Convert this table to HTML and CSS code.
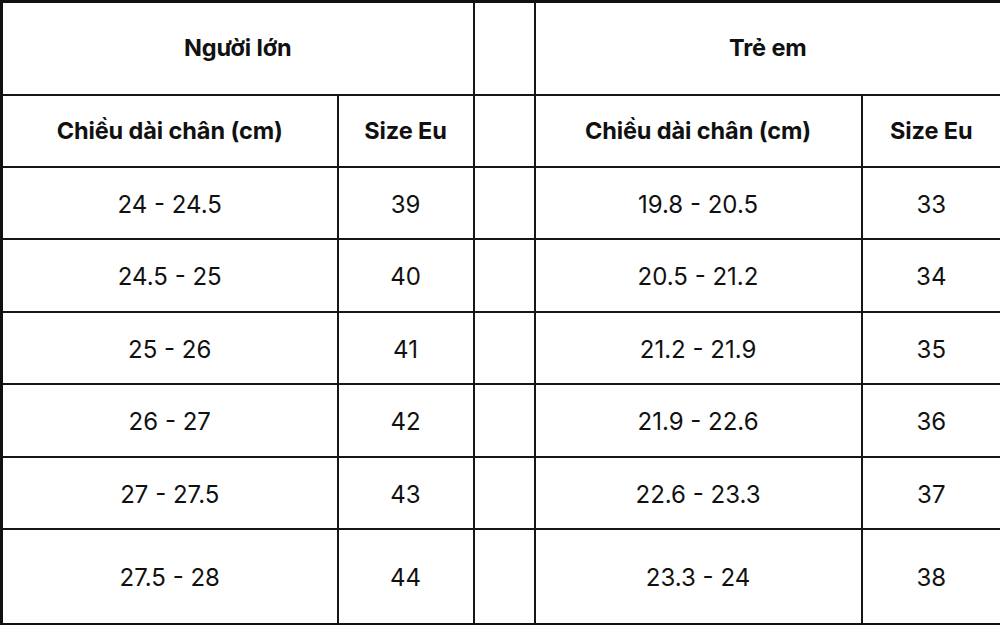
FILE: index.html
```html
<!DOCTYPE html>
<html lang="vi">
<head>
<meta charset="utf-8">
<title>Bảng size</title>
<link rel="stylesheet" href="styles.css">
</head>
<body>
<table class="size-table">
  <colgroup>
    <col class="c-len">
    <col class="c-size">
    <col class="c-gap">
    <col class="c-len2">
    <col class="c-size2">
  </colgroup>
  <tr class="row-title">
    <th colspan="2">Người lớn</th>
    <td class="gap"></td>
    <th colspan="2">Trẻ em</th>
  </tr>
  <tr class="row-head">
    <th>Chiều dài chân (cm)</th>
    <th>Size Eu</th>
    <td class="gap"></td>
    <th>Chiều dài chân (cm)</th>
    <th>Size Eu</th>
  </tr>
  <tr class="row-data"><td>24 - 24.5</td><td>39</td><td class="gap"></td><td>19.8 - 20.5</td><td>33</td></tr>
  <tr class="row-data"><td>24.5 - 25</td><td>40</td><td class="gap"></td><td>20.5 - 21.2</td><td>34</td></tr>
  <tr class="row-data"><td>25 - 26</td><td>41</td><td class="gap"></td><td>21.2 - 21.9</td><td>35</td></tr>
  <tr class="row-data"><td>26 - 27</td><td>42</td><td class="gap"></td><td>21.9 - 22.6</td><td>36</td></tr>
  <tr class="row-data"><td>27 - 27.5</td><td>43</td><td class="gap"></td><td>22.6 - 23.3</td><td>37</td></tr>
  <tr class="row-last"><td>27.5 - 28</td><td>44</td><td class="gap"></td><td>23.3 - 24</td><td>38</td></tr>
</table>
</body>
</html>
```

FILE: styles.css
```css
html, body {
  margin: 0;
  padding: 0;
  background: #ffffff;
}

body {
  font-family: Inter, "Noto Sans", "Liberation Sans", sans-serif;
  color: #111111;
}

.size-table {
  width: 1000px;
  height: 624px;
  border-collapse: collapse;
  table-layout: fixed;
  border: 3px solid #111111;
}

.c-len { width: 336px; }
.c-size { width: 136px; }
.c-gap { width: 61px; }
.c-len2 { width: 327px; }
.c-size2 { width: 140px; }

.size-table th,
.size-table td {
  border: 2px solid #161616;
  text-align: center;
  vertical-align: middle;
  padding: 0;
}

.size-table th {
  font-weight: 700;
  font-size: 23.5px;
  letter-spacing: -0.1px;
}

.size-table td {
  font-weight: 400;
  font-size: 24px;
}

.row-title { height: 93px; }
.row-title th { padding-bottom: 2px; }
.row-head { height: 72px; }
.row-data { height: 72.5px; }
.row-data td { padding-top: 3px; }
.row-last { height: 95px; }
.row-last td { padding-top: 2px; }
```
